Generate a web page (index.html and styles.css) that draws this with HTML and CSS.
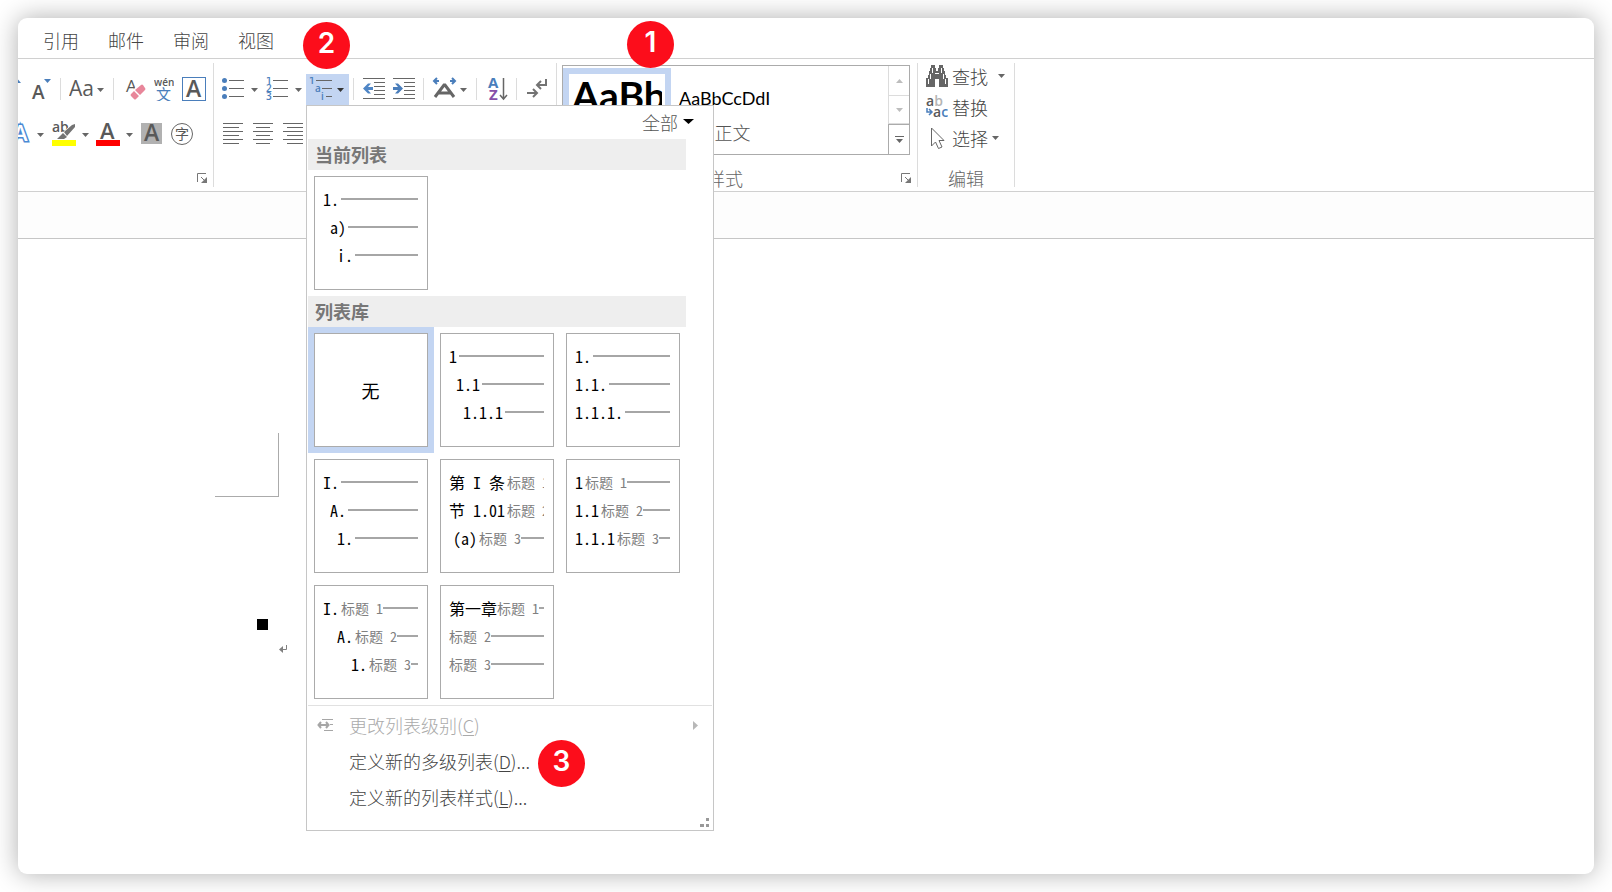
FILE: index.html
```html
<!DOCTYPE html>
<html lang="zh-CN">
<head>
<meta charset="utf-8">
<title>多级列表</title>
<link rel="stylesheet" href="styles.css">
</head>
<body>
<main class="window">
  <nav class="tabs">
    <a href="#ref">引用</a><a href="#mail">邮件</a><a href="#review">审阅</a><a href="#view">视图</a>
  </nav>

  <div class="ribbon">
    <section class="group font-group" aria-label="字体">
      <div class="row row-font-a">
        <button class="tool" aria-label="增大字号"><svg width="3" height="24"><path class="blue" d="M-4 6h7l-3.500-4z"/></svg></button>
        <button class="tool" aria-label="减小字号"><svg width="23" height="24"><text class="glyph" x="3" y="22" font-size="19">A</text><path class="blue" d="M15 2h7l-3.500 4z"/></svg></button>
        <i class="sep"></i>
        <button class="tool" aria-label="更改大小写"><svg width="36" height="24"><text class="glyph mid" x="0" y="19" font-size="21">Aa</text><path class="tri" d="M28 11h7l-3.500 4z"/></svg></button>
        <i class="sep"></i>
        <button class="tool" aria-label="清除格式"><svg width="24" height="24"><text class="glyph mid" x="4" y="15" font-size="17">A</text><path fill="#fff" d="M7 18 17 6l8 5-9 13z"/><path fill="#e8869a" d="m13 13 6-5q1-1 2 0l2 3q1 1 0 2l-5 5zM12 14l5 5-3 3q-1 1-2 0l-3-3q-1-1 0-2z"/></svg></button>
        <button class="tool" aria-label="拼音指南"><svg width="20" height="24"><text class="glyph" x="0" y="9" font-size="10">wén</text><text class="cjk blue" x="2" y="23" font-size="15">文</text></svg></button>
        <button class="tool" aria-label="字符边框"><svg width="24" height="24"><rect x=".5" y=".5" width="23" height="23" fill="#fff" stroke="#4a7ebb"/><text class="glyph" x="4" y="20" font-size="23">A</text></svg></button>
      </div>
      <div class="row row-font-b">
        <button class="tool" aria-label="文本效果"><svg width="26" height="26"><text class="fx" x="-5" y="20">A</text><path class="tri" d="M19 12h7l-3.500 4z"/></svg></button>
        <button class="tool" aria-label="突出显示"><svg width="38" height="26"><text class="glyph" x="1" y="11" font-size="14">ab</text><path stroke="#fff" stroke-width="5" d="M13 14 22 5"/><path fill="#737373" d="M13 11 21 4l3-1v3l-8 9zM12 12l4 4-3 2H6z"/><path fill="#ff0" d="M1 19h24v6H1z"/><path class="tri" d="M31 12h7l-3.500 4z"/></svg></button>
        <button class="tool" aria-label="字体颜色"><svg width="37" height="26"><text class="glyph" x="4" y="18" font-size="22">A</text><path fill="red" d="M0 19h24v6H0z"/><path class="tri" d="M30 12h7l-3.500 4z"/></svg></button>
        <button class="tool" aria-label="字符底纹"><svg width="22" height="26"><path fill="#b1b1b1" d="M1 2h21v21H1z"/><text class="glyph" x="4" y="20" font-size="23">A</text></svg></button>
        <button class="tool" aria-label="带圈字符"><svg width="24" height="26"><circle cx="13" cy="13" r="10.500" fill="none" stroke="#666"/><text class="cjk" x="6" y="18" font-size="14">字</text></svg></button>
      </div>
      <div class="foot"><button class="tool launcher" aria-label="字体设置"><svg width="11" height="11"><use href="#launch"/></svg></button></div>
    </section>

    <section class="group para-group" aria-label="段落">
      <div class="row row-para">
        <button class="tool" aria-label="项目符号"><svg width="40" height="24"><g class="blue"><circle cx="2.500" cy="3.500" r="2.500"/><circle cx="2.500" cy="11.500" r="2.500"/><circle cx="2.500" cy="19.500" r="2.500"/></g><path class="ln" d="M7 3.500h15M7 11.500h15M7 19.500h15"/><path class="tri" d="M29 11h7l-3.500 4z"/></svg></button>
        <button class="tool" aria-label="编号"><svg width="36" height="24"><g class="num blue"><text x="0" y="7">1</text><text x="0" y="15">2</text><text x="0" y="23">3</text></g><path class="ln" d="M7 3.500h15M7 11.500h15M7 19.500h15"/><path class="tri" d="M29 11h7l-3.500 4z"/></svg></button>
        <div class="anchor">
          <button class="tool pressed" aria-label="多级列表" aria-expanded="true"><svg width="43" height="24"><g class="num blue"><text x="3" y="7">1</text><text x="9" y="15">a</text><text x="15" y="23">i</text></g><path class="ln" d="M10 3.500h16M16 11.500h10M20 19.500h6"/><path fill="#333" d="M31 11h7l-3.500 4z"/></svg></button>
          <span class="badge badge-two">2</span>
          <div class="menu">
            <div class="filter"><button class="tool all">全部<svg width="11" height="6"><path d="M0 0h11L5.500 5z"/></svg></button></div>
            <h2>当前列表</h2>
            <div class="cells">
              <button class="cell"><span class="card">
                <span class="lv"><b>1.</b><i></i></span><span class="lv in1"><b>a)</b><i></i></span><span class="lv in2"><b>i.</b><i></i></span></span></button>
            </div>
            <h2>列表库</h2>
            <div class="cells">
              <button class="cell chosen"><span class="card none">无</span></button>
              <button class="cell"><span class="card">
                <span class="lv"><b>1</b><i></i></span><span class="lv in1"><b>1.1</b><i></i></span><span class="lv in2"><b>1.1.1</b><i></i></span></span></button>
              <button class="cell"><span class="card">
                <span class="lv"><b>1.</b><i></i></span><span class="lv"><b>1.1.</b><i></i></span><span class="lv"><b>1.1.1.</b><i></i></span></span></button>
              <button class="cell"><span class="card">
                <span class="lv"><b>I.</b><i></i></span><span class="lv in1"><b>A.</b><i></i></span><span class="lv in2"><b>1.</b><i></i></span></span></button>
              <button class="cell"><span class="card">
                <span class="lv"><b>第 I 条</b><em>标题 1</em><i></i></span><span class="lv"><b>节 1.01</b><em>标题 2</em><i></i></span><span class="lv in-half"><b>(a)</b><em>标题 3</em><i></i></span></span></button>
              <button class="cell"><span class="card">
                <span class="lv"><b>1</b><em>标题 1</em><i></i></span><span class="lv"><b>1.1</b><em>标题 2</em><i></i></span><span class="lv"><b>1.1.1</b><em>标题 3</em><i></i></span></span></button>
              <button class="cell"><span class="card">
                <span class="lv"><b>I.</b><em>标题 1</em><i></i></span><span class="lv in2"><b>A.</b><em>标题 2</em><i></i></span><span class="lv in4"><b>1.</b><em>标题 3</em><i></i></span></span></button>
              <button class="cell"><span class="card">
                <span class="lv tight"><b>第一章</b><em>标题 1</em><i></i></span><span class="lv"><em>标题 2</em><i></i></span><span class="lv"><em>标题 3</em><i></i></span></span></button>
            </div>
            <div class="commands">
              <button class="command" disabled><svg width="17" height="14"><path class="faint" d="M5 1.500h11M13 6.500h3M7 12.500h9"/><path fill="none" stroke="#a6a6a6" stroke-width="2" d="M2 7h9M4 4 1.500 7 4 10M9 4l2.500 3L9 10"/></svg><span class="label">更改列表级别(<u>C</u>)</span><svg class="more" width="5" height="9"><path fill="#b8b8b8" d="M0 0l5 4.500L0 9z"/></svg></button>
              <button class="command"><span class="label">定义新的多级列表(<u>D</u>)...</span><span class="badge badge-three">3</span></button>
              <button class="command"><span class="label">定义新的列表样式(<u>L</u>)...</span></button>
            </div>
            <div class="grip"><svg width="9" height="9"><path fill="#999" d="M6 0h3v3H6zM0 6h4v3H0zM6 6h3v3H6z"/></svg></div>
          </div>
        </div>
        <i class="sep"></i>
        <button class="tool" aria-label="减少缩进量"><svg width="31" height="24"><path class="ln" d="M5 1.500h22M16 5.500h11M16 9.500h11M16 13.500h11M16 17.500h11M5 21.500h22"/><path fill="#4f86c6" d="m5 11.500 5-5h3l-3 3.500h5v3h-5l3 3.500h-3z"/></svg></button>
        <button class="tool" aria-label="增加缩进量"><svg width="26" height="24"><path class="ln" d="M0 1.500h22M11 5.500h11M11 9.500h11M11 13.500h11M11 17.500h11M0 21.500h22"/><path class="blue" d="m10 11.500-5-5H2L5 10H0v3h5l-3 3.500h3z"/></svg></button>
        <i class="sep"></i>
        <button class="tool" aria-label="中文版式"><svg width="44" height="24"><path fill="none" stroke="#666" stroke-width="3" d="M7 20 16 8h1l9 12M11 16h11"/><path fill="none" stroke="#4a7ebb" stroke-width="2" d="M6 4h5M9 1 6 4l3 3M22 4h5M24 1l3 3-3 3"/><path class="tri" d="M32 11h7l-3.500 4z"/></svg></button>
        <i class="sep"></i>
        <button class="tool" aria-label="排序"><svg width="31" height="24"><text class="glyph blue heavy" x="7" y="11" font-size="15">A</text><text class="glyph purple heavy" x="8" y="23" font-size="15">Z</text><path fill="none" stroke="#666" stroke-width="1.500" d="M22.500 1v21M19 18l3.500 4 3.500-4"/></svg></button>
        <i class="sep"></i>
        <button class="tool" aria-label="显示编辑标记"><svg width="27" height="24"><path fill="none" stroke="#737373" stroke-width="2" d="M25 2v6h-9M20 4l-4 4 4 4M6 16h10M12 12l4 4-4 4"/></svg></button>
      </div>
      <div class="row row-align">
        <button class="tool" aria-label="左对齐"><svg width="20" height="22"><path class="ln" d="M0 .5h20M0 4.500h16M0 8.500h20M0 12.500h16M0 16.500h20M0 20.500h16"/></svg></button>
        <button class="tool" aria-label="居中"><svg width="20" height="22"><path class="ln" d="M0 .5h20M3 4.500h14M0 8.500h20M3 12.500h14M0 16.500h20M3 20.500h14"/></svg></button>
        <button class="tool" aria-label="右对齐"><svg width="20" height="22"><path class="ln" d="M0 .5h20M4 4.500h16M0 8.500h20M4 12.500h16M0 16.500h20M4 20.500h16"/></svg></button>
      </div>
    </section>

    <section class="group style-group" aria-label="样式">
      <div class="gallery">
        <button class="style picked"><span class="big">AaBb</span></button>
        <button class="style"><span class="sample">AaBbCcDdI</span><span class="name">↵ 正文</span></button>
        <div class="scroller">
          <button aria-label="上一行"><svg width="7" height="4"><path fill="#bdbdbd" d="M0 4h7L3.500 0z"/></svg></button>
          <button aria-label="下一行"><svg width="7" height="4"><path fill="#bdbdbd" d="M0 0h7L3.500 4z"/></svg></button>
          <button class="expand" aria-label="其他"><svg width="9" height="8"><path class="ln" d="M0 .5h9"/><path class="tri" d="M1 3h7L4.500 7z"/></svg></button>
        </div>
        <span class="badge badge-one">1</span>
      </div>
      <div class="foot"><span class="caption">样式</span><button class="tool launcher" aria-label="样式窗格"><svg width="11" height="11"><use href="#launch"/></svg></button></div>
    </section>

    <section class="group edit-group" aria-label="编辑">
      <div class="edits">
        <button class="edit"><svg width="22" height="22"><path fill="#666" d="M5 0h4v3h1v3h2V3h1V0h4v3h1v3h1v4h1v3h2v9h-9v-8h-4v8H0v-9h2v-3h1V6h1V3h1z"/><path stroke="#fff" fill="none" d="M6.500 3v5M15.500 3v5M4.500 9v5M17.500 9v5M2.500 14v5M19.500 14v5M9 8.500h4"/></svg>查找<svg class="gap" width="7" height="4"><path class="tri" d="M0 0h7L3.500 4z"/></svg></button>
        <button class="edit"><svg width="22" height="24"><g font-size="14"><text class="glyph" x="0" y="11">a<tspan fill="#b5b5b5">b</tspan></text><text class="glyph" x="7" y="22">a<tspan fill="#4a7ebb">c</tspan></text></g><path fill="none" stroke="#4a7ebb" stroke-width="1.500" d="M1 13v4h5M3 14l3 3-3 3"/></svg>替换</button>
        <button class="edit"><svg width="22" height="24"><path fill="#fff" stroke="#666" d="M5.500 2v18l4-4 3 6.500 3.500-1.500-3-6.500h5z"/></svg>选择<svg width="7" height="4"><path class="tri" d="M0 0h7L3.500 4z"/></svg></button>
      </div>
      <div class="foot"><span class="caption">编辑</span></div>
    </section>
  </div>

  <div class="gutter"></div>
  <article class="page">
    <div class="crop"></div>
    <div class="block"></div>
    <svg class="mark" width="8" height="8"><path fill="none" stroke="#808080" d="M7.500 0v4.500H1"/><path fill="#808080" d="M0 4.500 4 1v7z"/></svg>
  </article>
</main>
<svg width="0" height="0" class="defs"><defs><g id="launch"><path fill="none" stroke="#777" d="M.5 9V.5H9M4 4l4 4"/><path fill="#777" d="M10 4v6H4z"/></g></defs></svg>
</body>
</html>
```

FILE: styles.css
```css
* { box-sizing: border-box; }

body {
  margin: 0;
  padding: 18px;
  min-height: 100vh;
  display: flex;
  background: #fff;
  color: #444;
  font: 300 18px/24px "Noto Sans CJK SC", sans-serif;
}

button {
  margin: 0;
  padding: 0;
  border: 0;
  background: none;
  color: inherit;
  font: inherit;
  text-align: left;
}

svg { display: block; flex: none; overflow: hidden; }

.defs { position: absolute; }

.window {
  flex: 1;
  min-width: 0;
  display: flex;
  flex-direction: column;
  border-radius: 9px;
  background: #fff;
  box-shadow: 0 0 26px rgba(0, 0, 0, .32);
}

.tabs {
  display: flex;
  gap: 29px;
  padding: 10px 25px 6px;
  border-bottom: 1px solid #d0d0d0;
}

.tabs a { color: #444; text-decoration: none; }

.ribbon {
  display: flex;
  height: 133px;
  padding: 4px 0;
  border-bottom: 1px solid #d0d0d0;
}

.group {
  display: flex;
  flex-direction: column;
  padding-top: 11px;
  border-right: 1px solid #dcdcdc;
}

.row { display: flex; align-items: center; height: 30px; }
.row + .row { margin-top: 15px; }
.row-font-a { gap: 8px; }
.row-font-b { gap: 7px; }
.row-para { gap: 4px; }
.row-align { gap: 10px; padding-left: 1px; }

.font-group { padding-right: 5px; }
.para-group { padding-left: 8px; padding-right: 8px; }
.font-group .row { margin-right: 2px; }

.sep { flex: none; width: 1px; height: 22px; background: #dcdcdc; }

.foot { display: flex; align-items: center; height: 18px; margin-top: auto; color: #666; }
.launcher { margin-left: auto; }

.glyph { font-family: "Open Sans", sans-serif; font-weight: 600; fill: #595959; }
.mid { font-weight: 500; }
.heavy { font-weight: 700; }
.cjk { font-family: "Noto Sans CJK SC", sans-serif; font-weight: 400; fill: #595959; }
.num { font: 600 10px "Open Sans", sans-serif; }
.fx { font: 600 22px "Open Sans", sans-serif; fill: #fff; stroke: #4a8ad4; stroke-width: 3px; paint-order: stroke; }
.blue { fill: #4a7ebb; }
.purple { fill: #8650a8; }
.tri { fill: #666; }
.ln { stroke: #666; fill: none; }
.faint { stroke: #a6a6a6; fill: none; }

.anchor { position: relative; align-self: flex-start; }

.pressed {
  display: flex;
  align-items: flex-start;
  height: 31px;
  padding-top: 3px;
  background: #c3d5f2;
}

.badge {
  position: absolute;
  z-index: 3;
  width: 47px;
  height: 47px;
  border-radius: 50%;
  background: #fc0d1b;
  color: #fff;
  font: 600 28px/43px Inter, sans-serif;
  text-align: center;
}

.badge-one { left: 64px; top: -45px; }
.badge-two { left: -3px; top: -52px; }
.badge-three { left: 230px; top: -3px; }

.menu {
  position: absolute;
  z-index: 2;
  top: 100%;
  left: 0;
  width: 408px;
  padding: 0 1px;
  border: 1px solid #c6c6c6;
  background: #fff;
}

.filter { display: flex; justify-content: flex-end; padding: 4px 18px 5px 0; color: #555; }
.all { display: flex; align-items: center; gap: 5px; }

.menu h2 {
  margin: 0 26px 0 0;
  padding: 3px 7px 4px;
  background: #eee;
  color: #777;
  font-size: 18px;
  font-weight: 700;
  line-height: 24px;
}

.cells { display: grid; grid-template-columns: repeat(3, 126px); }
.cell { display: block; padding: 6px; }
.chosen { background: #c3d5f2; }

.card {
  display: block;
  height: 114px;
  padding: 8px 9px 8px 8px;
  border: 1px solid #ababab;
  background: #fff;
  color: #000;
}

.none { display: flex; align-items: center; justify-content: center; font-weight: 400; }

.lv {
  display: flex;
  align-items: center;
  gap: 2px;
  height: 28px;
  overflow: hidden;
  white-space: pre;
  line-height: 22px;
  font-feature-settings: "hwid";
}

.lv b { font-size: 16px; font-weight: 400; }
.lv em { color: #808080; font-size: 14px; font-style: normal; font-weight: 400; }
.lv em + i { margin-left: -2px; }
.lv i { flex: 1; height: 2px; background: #a6a6a6; }
.lv.tight { gap: 0; }
.tight em + i { margin-left: 0; }
.in-half { padding-left: 4px; }
.in1 { padding-left: 7px; }
.in2 { padding-left: 14px; }
.in4 { padding-left: 28px; }

.commands { padding-top: 1px; border-top: 1px solid #e1e1e1; }

.command {
  position: relative;
  display: flex;
  align-items: center;
  width: 100%;
  height: 36px;
  padding: 0 14px 0 9px;
}

.label { padding-left: 32px; }
.command svg + .label { padding-left: 15px; }
.command:disabled { color: #aaa; }
.more { margin-left: auto; }
.command u { text-underline-offset: 2px; text-decoration-thickness: 1px; }
.grip { display: flex; justify-content: flex-end; padding: 3px; }

.style-group { padding: 2px 5px 0 5px; }

.gallery {
  position: relative;
  display: flex;
  width: 348px;
  height: 90px;
  margin-right: 2px;
  border: 1px solid #ababab;
}

.style {
  display: flex;
  flex-direction: column;
  align-items: center;
  width: 108px;
  height: 86px;
  margin-top: 2px;
  padding-top: 18px;
}

.picked { padding: 0 3px; border: 6px solid #c3d5f2; }
.big { width: 90px; overflow: hidden; color: #000; font: 700 39px/42px Lato, sans-serif; }
.sample { width: 92px; overflow: hidden; color: #000; font: 400 18px/24px Lato, sans-serif; }
.name { margin: 10px 4px 0 0; color: #555; }

.scroller { display: grid; grid-template-rows: 30px 28px 1fr; width: 21px; margin-left: auto; }
.scroller button { display: flex; align-items: center; justify-content: center; border-left: 1px solid #dcdcdc; border-bottom: 1px solid #dcdcdc; }
.scroller .expand { border: 0; border-left: 1px solid #ababab; border-top: 1px solid #ababab; }

.style-group .foot { padding-left: 145px; }

.edit-group { width: 97px; padding: 1px 0 0 8px; }
.edits { display: flex; flex-direction: column; gap: 7px; }
.edit { display: flex; align-items: center; gap: 4px; height: 24px; white-space: nowrap; }
.gap { margin-left: 6px; }
.edit-group .foot { padding-left: 22px; }

.gutter { height: 47px; border-bottom: 1px solid #c6c6c6; background: #fdfdfd; }

.page { flex: 1; padding-top: 194px; }
.crop { width: 64px; height: 64px; margin-left: 197px; border: solid #ababab; border-width: 0 1px 1px 0; }
.block { width: 11px; height: 11px; margin: 122px 0 15px 239px; background: #000; }
.mark { margin-left: 261px; }
```
